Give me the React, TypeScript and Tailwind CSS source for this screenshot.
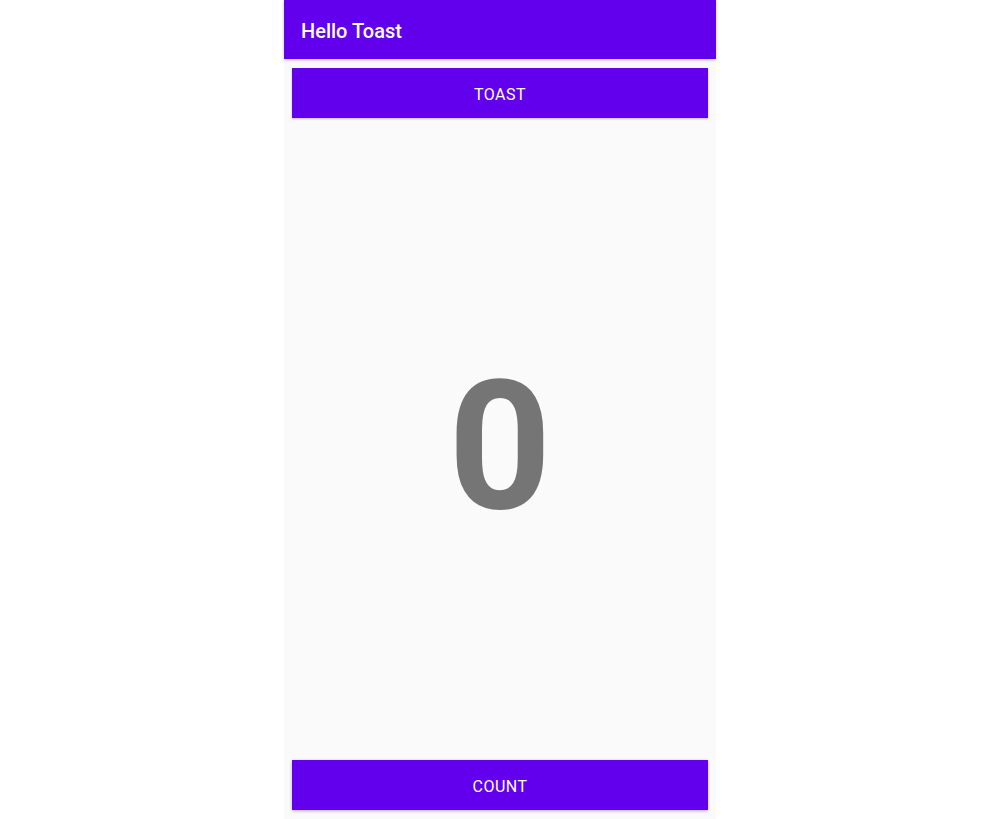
export default function App() {
  return (
    <div className="w-full h-[819px] flex justify-center bg-white" style={{ fontFamily: 'Roboto, "Noto Sans", sans-serif' }}>
      <div className="w-[432px] h-full bg-[#fafafa] flex flex-col">
        <div className="h-[59px] shrink-0 bg-[#6200ee] flex items-center px-[17px] pt-[2px] shadow-[0_1px_3px_rgba(0,0,0,0.25)] relative z-10">
          <h1 className="text-[20px] font-medium text-white leading-none">Hello Toast</h1>
        </div>

        <button className="mx-2 mt-[9px] h-[50px] shrink-0 bg-[#6200ee] text-white text-[16px] font-normal tracking-[0.03em] pt-[3px] shadow-[0_1px_2px_rgba(0,0,0,0.25)]">
          TOAST
        </button>

        <div className="flex-1 flex items-center justify-center">
          <span className="text-[180px] font-bold text-[#757575] leading-none mt-[16px]">0</span>
        </div>

        <button className="mx-2 mb-[9px] h-[50px] shrink-0 bg-[#6200ee] text-white text-[16px] font-normal tracking-[0.03em] pt-[3px] shadow-[0_1px_3px_rgba(0,0,0,0.3)]">
          COUNT
        </button>
      </div>
    </div>
  );
}
